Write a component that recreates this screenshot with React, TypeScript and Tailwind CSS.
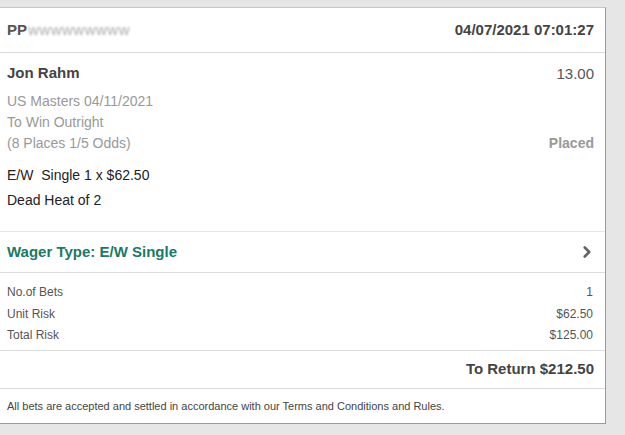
import { ChevronRight } from 'lucide-react';

const details = [
  { label: 'No.of Bets', value: '1' },
  { label: 'Unit Risk', value: '$62.50' },
  { label: 'Total Risk', value: '$125.00' },
];

const App = () => {
  return (
    <div className="w-[625px] h-[435px] bg-[#e6e6e6] pt-[7px] font-['Liberation_Sans',Arial,sans-serif]">
      <div className="w-[606px] h-[417px] bg-white border-t border-t-[#c8c8c8] border-r border-b border-r-[#9a9a9a] border-b-[#9a9a9a] flex flex-col">
        {/* header */}
        <div className="h-[45px] shrink-0 flex items-center justify-between pl-[7px] pr-[11px] border-b border-[#dcdcdc]">
          <div className="flex items-center text-[15px] font-bold text-[#555]">
            <span>PP</span>
            <span className="ml-[1px] text-[#aaa] font-normal tracking-[0.5px] blur-[1px]">wwwwwwwww</span>
          </div>
          <span className="text-[15px] font-bold text-[#444]">04/07/2021 07:01:27</span>
        </div>

        {/* selection */}
        <div className="h-[179px] shrink-0 pt-[9px] pl-[7px] pr-[11px] border-b border-[#e6e6e6]">
          <div className="flex justify-between leading-[21px]">
            <span className="text-[15px] font-bold text-[#444]">Jon Rahm</span>
            <span className="text-[15px] text-[#555] mt-[1px]">13.00</span>
          </div>
          <div className="mt-[7px] flex justify-between items-end text-[14px] leading-[21px]">
            <div className="text-[#999]">
              <div>US Masters 04/11/2021</div>
              <div>To Win Outright</div>
              <div>(8 Places 1/5 Odds)</div>
            </div>
            <span className="font-bold text-[#999]">Placed</span>
          </div>
          <div className="mt-[9px] text-[14px] leading-[25px] text-[#222]">
            <div className="whitespace-pre">E/W  Single 1 x $62.50</div>
            <div>Dead Heat of 2</div>
          </div>
        </div>

        {/* wager type */}
        <div className="h-[41px] shrink-0 flex items-center justify-between pl-[7px] pr-[9px] border-b border-[#dcdcdc]">
          <span className="text-[15px] font-bold text-[#1b7a63]">Wager Type: E/W Single</span>
          <ChevronRight size={18} strokeWidth={3.5} className="text-[#666]" />
        </div>

        {/* details */}
        <div className="h-[78px] shrink-0 pt-[9px] pl-[7px] pr-[12px] border-b border-[#dcdcdc] text-[12px] text-[#555]">
          {details.map((row) => (
            <div key={row.label} className="flex justify-between leading-[21.5px]">
              <span>{row.label}</span>
              <span>{row.value}</span>
            </div>
          ))}
        </div>

        {/* return */}
        <div className="h-[38px] shrink-0 flex items-center justify-end pr-[11px] border-b border-[#dcdcdc]">
          <span className="text-[15px] font-bold text-[#444]">To Return $212.50</span>
        </div>

        {/* footer */}
        <div className="flex-1 flex items-center pl-[7px]">
          <span className="text-[11px] text-[#444]">
            All bets are accepted and settled in accordance with our Terms and Conditions and Rules.
          </span>
        </div>
      </div>
    </div>
  );
};

export default App;
